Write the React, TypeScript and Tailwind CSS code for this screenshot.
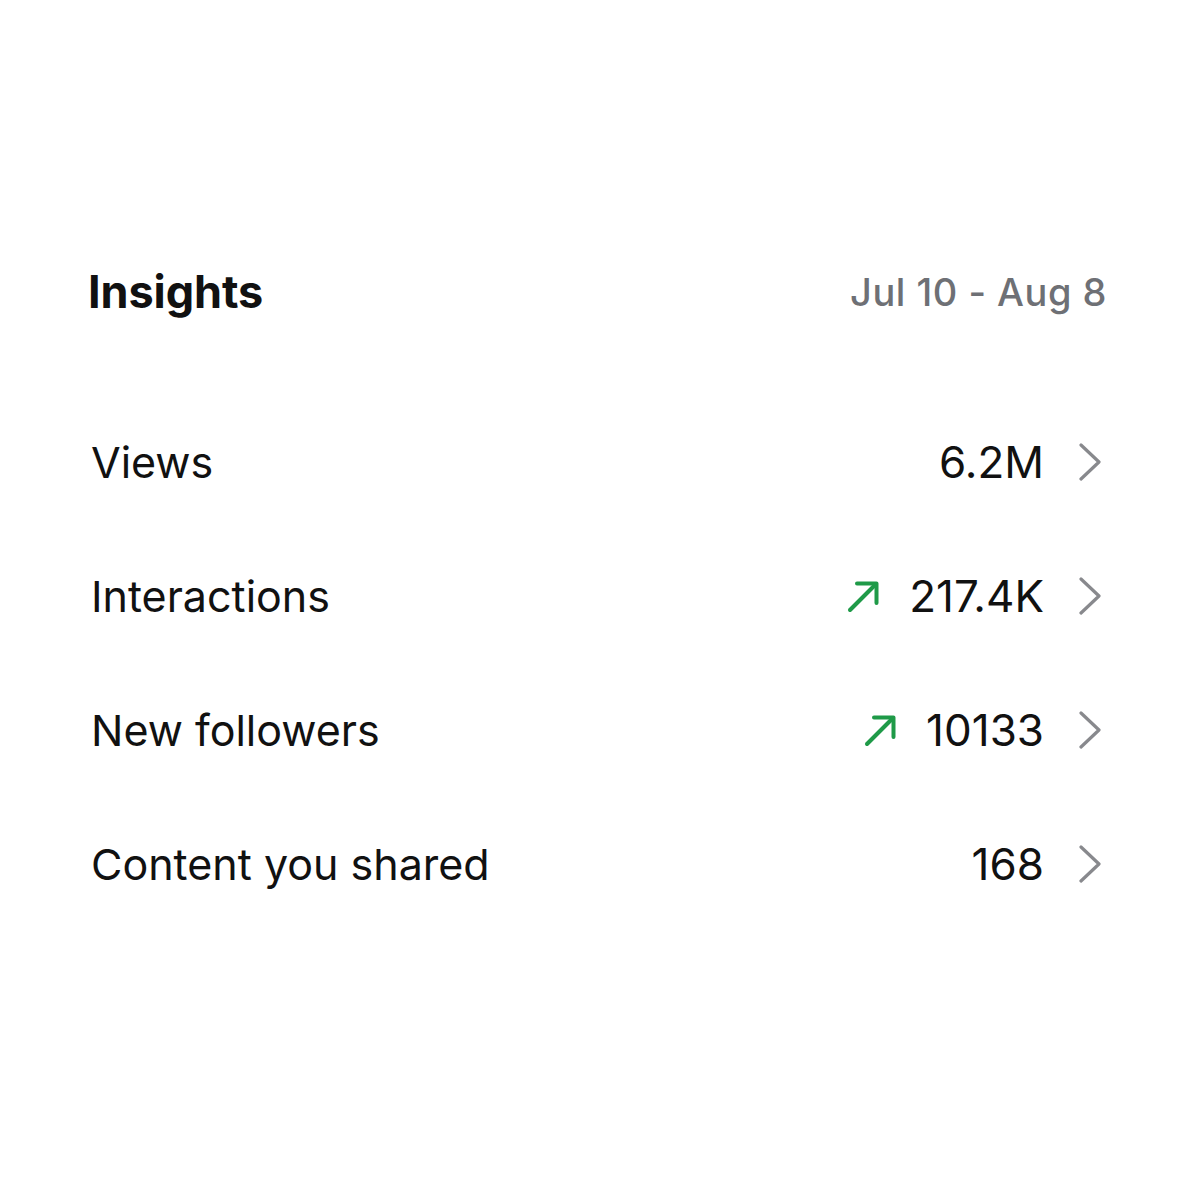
const rows = [
	{ label: "Views", value: "6.2M", up: false },
	{ label: "Interactions", value: "217.4K", up: true },
	{ label: "New followers", value: "10133", up: true },
	{ label: "Content you shared", value: "168", up: false },
]

function UpArrow() {
	return (
		<svg width="34" height="34" viewBox="0 0 34 34" fill="none" stroke="#1f9a48" strokeWidth="4" strokeLinecap="round" strokeLinejoin="round">
			<path d="M3 31 L29 5" />
			<path d="M10 4.5 H29.5 V24" />
		</svg>
	)
}

function Chevron() {
	return (
		<svg width="24" height="38" viewBox="0 0 24 38" fill="none" stroke="#88898d" strokeWidth="3.2" strokeLinecap="round" strokeLinejoin="round">
			<path d="M3 2 L21 19 L3 36" />
		</svg>
	)
}

export default function App() {
	return (
		<div className="min-h-[1200px] w-[1200px] bg-white font-['Inter',sans-serif] text-[#111] px-[88px] pt-[266px]">
			<div className="flex items-center justify-between h-[52px]">
				<h1 className="text-[45px] font-bold tracking-[-0.1px]">Insights</h1>
				<span className="text-[38px] font-medium text-[#6e7075] tracking-[0.5px] mr-[5px]">Jul 10 - Aug 8</span>
			</div>
			<div className="mt-[114px] flex flex-col">
				{rows.map((row) => (
					<div key={row.label} className="flex items-center justify-between h-[134px] first:-mt-[37px]">
						<span className="text-[43px] ml-[3px]">{row.label}</span>
						<div className="flex items-center mr-[10px]">
							{row.up && (
								<span className="mr-[28px]">
									<UpArrow />
								</span>
							)}
							<span className="text-[44px]">{row.value}</span>
							<span className="ml-[34px] flex">
								<Chevron />
							</span>
						</div>
					</div>
				))}
			</div>
		</div>
	)
}
